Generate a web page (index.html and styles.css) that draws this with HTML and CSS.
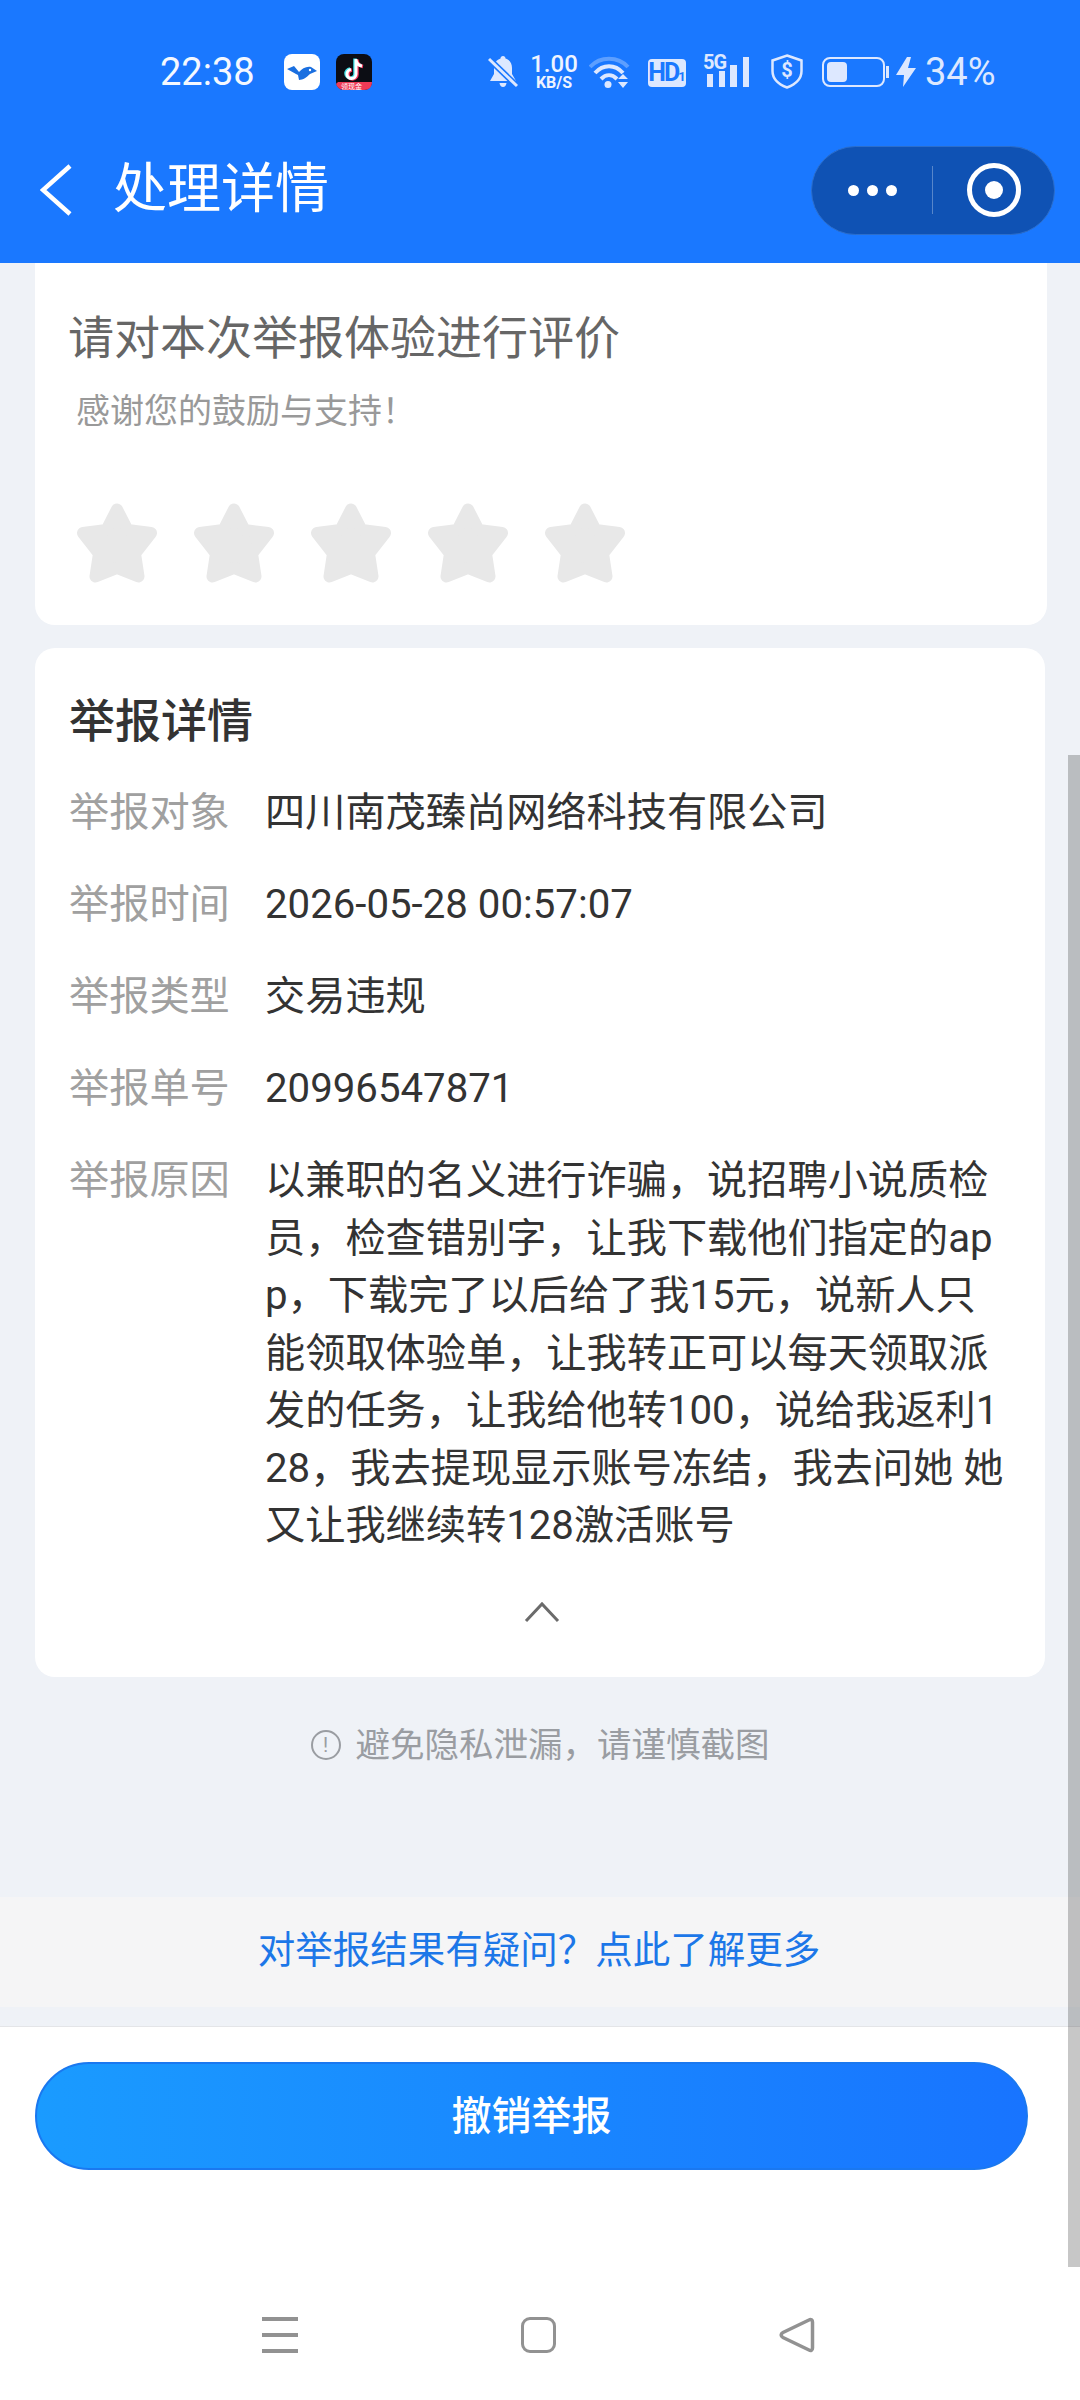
FILE: index.html
```html
<!DOCTYPE html>
<html lang="zh-CN">
<head>
	<meta charset="utf-8">
	<title>处理详情</title>
	<link rel="stylesheet" href="styles.css">
</head>
<body>
<div class="screen">
	<div class="topBar">
		<div class="statusBar">
			<span class="clock">22:38</span>
			<svg class="appIcon birdIcon" width="36" height="36" viewBox="0 0 36 36">
				<rect width="36" height="36" rx="8" fill="#fff"/>
				<path d="M3 15L10 12L15 18C18 15 22 12 27 13L33 17L26 20C23 23 19 26 15 26L14 21L12 20Z" fill="#1a6fe0"/>
				<circle cx="26" cy="16" r="1.200" fill="#fff"/>
			</svg>
			<svg class="appIcon tiktokIcon" width="36" height="36" viewBox="0 0 36 36">
				<rect width="36" height="36" rx="8" fill="#0c0d14"/>
				<path d="M20 5V20A4.500 4.500 0 1 1 15 15.500M20 6C20.500 9.500 23 11.500 26 12" fill="none" stroke="#3fe0e6" stroke-width="3.500" transform="translate(-1 -.5)"/>
				<path d="M20 5V20A4.500 4.500 0 1 1 15 15.500M20 6C20.500 9.500 23 11.500 26 12" fill="none" stroke="#f5365c" stroke-width="3.500" transform="translate(1 .5)"/>
				<path d="M20 5V20A4.500 4.500 0 1 1 15 15.500M20 6C20.500 9.500 23 11.500 26 12" fill="none" stroke="#fff" stroke-width="3"/>
				<path d="M2 28H36V28C36 33 33 36 28 36H8C4 36 1 33 0 30Z" fill="#ef3a56"/>
				<text x="5" y="34.500" font-size="7" fill="#fff" font-family="Noto Sans CJK SC">领现金</text>
			</svg>

			<svg class="bellIcon" width="30" height="34" viewBox="0 0 30 34">
				<path d="M15 1C16.500 1 17.500 2 17.500 3.500C22 5 24 8.500 24 13V19L28 26H2L6 19V13C6 8.500 8 5 12.500 3.500C12.500 2 13.500 1 15 1Z" fill="#dde8ff"/>
				<path d="M11.500 28H18.500C18 30.500 17 32 15 32C13 32 12 30.500 11.500 28Z" fill="#dde8ff"/>
				<path d="M1 4L29 31" stroke="#1a78ff" stroke-width="6"/>
				<path d="M1 4L29 31" stroke="#dde8ff" stroke-width="3"/>
			</svg>
			<div class="netSpeed">1.00<small>KB/S</small></div>
			<svg class="wifiIcon" width="44" height="34" viewBox="0 0 44 34">
				<path d="M1 12C11 1 29 1 39 12" fill="none" stroke="#dde8ff" stroke-opacity=".35" stroke-width="4"/>
				<path d="M6 18C14 9 26 9 34 18" fill="none" stroke="#dde8ff" stroke-width="4"/>
				<path d="M12 24C17 19 23 19 28 24" fill="none" stroke="#dde8ff" stroke-width="4"/>
				<circle cx="19" cy="29.500" r="3.500" fill="#dde8ff"/>
				<path d="M29 24L34 19L39 24ZM29 27L34 33L39 27Z" fill="#dde8ff"/>
			</svg>
			<span class="hdBadge">HD<small>1</small></span>
			<div class="signal">
				<span class="signalLabel">5G</span>
				<svg width="46" height="30" viewBox="0 0 46 30">
					<path d="M4 17H10V30H4ZM16 14H22V30H16ZM27 8H34V30H27ZM40 0H46V30H40Z" fill="#dde8ff"/>
				</svg>
			</div>
			<div class="shield">
				<svg width="32" height="35" viewBox="0 0 32 35">
					<path d="M16 1.500L30.500 6.500V17C30.500 25 24 30.500 16 33.500C8 30.500 1.500 25 1.500 17V6.500Z" fill="none" stroke="#dde8ff" stroke-width="2.500"/>
				</svg>
				<span class="shieldMark">$</span>
			</div>
			<div class="battery"><div class="batteryFill"></div></div>
			<div class="batteryNub"></div>
			<svg class="boltIcon" width="20" height="30" viewBox="0 0 20 30">
				<path d="M11 0L0 18H8L7 30L20 11H12L15 0Z" fill="#dde8ff"/>
			</svg>
			<span class="batteryText">34%</span>
		</div>

		<div class="navBar">
			<svg class="backIcon" width="32" height="52" viewBox="0 0 32 52">
				<path d="M30 2L3 26L30 50" fill="none" stroke="#fff" stroke-width="4.500"/>
			</svg>
			<h1 class="navTitle">处理详情</h1>
			<div class="capsule">
				<div class="capsuleDots"><i></i><i></i><i></i></div>
				<div class="capsuleLine"></div>
				<div class="capsuleTarget"><i></i></div>
			</div>
		</div>
	</div>

	<div class="content">
		<div class="rateCard">
			<div class="rateTitle">请对本次举报体验进行评价</div>
			<div class="rateSub">感谢您的鼓励与支持！</div>
			<div class="stars">
				<svg width="80" height="80" viewBox="0 0 80 80"><use href="#star"/></svg>
				<svg width="80" height="80" viewBox="0 0 80 80"><use href="#star"/></svg>
				<svg width="80" height="80" viewBox="0 0 80 80"><use href="#star"/></svg>
				<svg width="80" height="80" viewBox="0 0 80 80"><use href="#star"/></svg>
				<svg width="80" height="80" viewBox="0 0 80 80"><use href="#star"/></svg>
			</div>
		</div>

		<div class="detailCard">
			<div class="detailTitle">举报详情</div>
			<div class="detailRow"><span class="rowLabel">举报对象</span><span class="rowValue">四川南茂臻尚网络科技有限公司</span></div>
			<div class="detailRow"><span class="rowLabel">举报时间</span><span class="rowValue">2026-05-28 00:57:07</span></div>
			<div class="detailRow"><span class="rowLabel">举报类型</span><span class="rowValue">交易违规</span></div>
			<div class="detailRow"><span class="rowLabel">举报单号</span><span class="rowValue">20996547871</span></div>
			<div class="detailRow"><span class="rowLabel">举报原因</span><span class="rowValue">以兼职的名义进行诈骗，说招聘小说质检员，检查错别字，让我下载他们指定的app，下载完了以后给了我15元，说新人只能领取体验单，让我转正可以每天领取派发的任务，让我给他转100，说给我返利128，我去提现显示账号冻结，我去问她 她又让我继续转128激活账号</span></div>
			<div class="collapse">
				<svg width="36" height="22" viewBox="0 0 36 22">
					<path d="M2 20L18 3L34 20" fill="none" stroke="#6b6b6b" stroke-width="3"/>
				</svg>
			</div>
		</div>

		<div class="tip">
			<span class="tipIcon">!</span>
			<span>避免隐私泄漏，请谨慎截图</span>
		</div>

		<div class="moreBand">对举报结果有疑问？点此了解更多</div>
	</div>

	<div class="footer">
		<div class="cancelBtn">撤销举报</div>
		<div class="sysNav">
			<div class="menuKey"><i></i><i></i><i></i></div>
			<div class="homeKey"></div>
			<svg width="36" height="36" viewBox="0 0 36 36">
				<path d="M30 3C32 2 33.500 3 33.500 5V31C33.500 33 32 34 30 33L4 20.500C1.500 19 1.500 17 4 15.500Z" fill="none" stroke="#929292" stroke-width="3.500"/>
			</svg>
		</div>
	</div>

	<div class="scrollThumb"></div>
</div>

<svg class="defs" width="0" height="0">
	<symbol id="star" viewBox="0 0 80 80">
		<polygon points="40,6.500 50.500,27 74,30 58,50.500 61.500,73.500 40,65 18.500,73.500 22,50.500 6,30 29.500,27" fill="#e8e8e8" stroke="#e8e8e8" stroke-width="12" stroke-linejoin="round"/>
	</symbol>
</svg>
</body>
</html>
```

FILE: styles.css
```css
* {
	box-sizing: border-box;
}

body {
	margin: 0;
	font-family: Roboto, "Noto Sans CJK SC", sans-serif;
	background-color: #eff2f7;
}

.screen {
	position: relative;
	width: 1080px;
	height: 2400px;
	overflow: hidden;
	display: flex;
	flex-direction: column;
}

.defs {
	position: absolute;
}

/* top blue part */
.topBar {
	height: 263px;
	background-color: #1a78ff;
	color: #fff;
}

.statusBar {
	height: 108px;
	padding: 54px 0 0 160px;
	display: flex;
	align-items: flex-start;
}

.clock {
	font-size: 38px;
	line-height: 36px;
	width: 94px;
	color: #f4f8ff;
}

.birdIcon {
	margin-left: 30px;
}

.tiktokIcon {
	margin-left: 16px;
}

.bellIcon {
	margin: 1px 0 0 116px;
}

.netSpeed {
	width: 48px;
	margin-left: 12px;
	text-align: center;
	color: #eef4ff;
	font-size: 24px;
	line-height: 20px;
	font-weight: 500;
}

.netSpeed small {
	display: block;
	margin-top: 2px;
	font-size: 16px;
	line-height: 14px;
	font-weight: 700;
}

.wifiIcon {
	margin: 1px 0 0 11px;
}

.hdBadge {
	margin: 5px 0 0 15px;
	width: 38px;
	height: 28px;
	border-radius: 4px;
	background-color: #dde8ff;
	color: #1a78ff;
	font-size: 25px;
	line-height: 28px;
	font-weight: 700;
	letter-spacing: -2px;
	text-align: center;
}

.hdBadge small {
	font-size: 13px;
	letter-spacing: 0;
}

.signal {
	position: relative;
	width: 49px;
	height: 34px;
	margin-left: 17px;
	padding-top: 3px;
}

.signal svg {
	display: block;
}

.signalLabel {
	position: absolute;
	left: 0;
	top: 0;
	font-size: 20px;
	line-height: 17px;
	font-weight: 700;
	letter-spacing: -1px;
	color: #dde8ff;
}

.shield {
	position: relative;
	width: 32px;
	height: 35px;
	margin-left: 19px;
}

.shieldMark {
	position: absolute;
	left: 0;
	right: 0;
	top: 5px;
	text-align: center;
	font-size: 20px;
	line-height: 23px;
	font-weight: 700;
	color: #dde8ff;
}

.battery {
	width: 63px;
	height: 30px;
	margin: 3px 0 0 19px;
	padding: 3px;
	border: 2.500px solid #dde8ff;
	border-radius: 8px;
}

.batteryFill {
	width: 20px;
	height: 100%;
	border-radius: 4px;
	background-color: #dde8ff;
}

.batteryNub {
	width: 3px;
	height: 12px;
	margin: 12px 0 0 1px;
	background-color: #dde8ff;
}

.boltIcon {
	margin: 3px 0 0 7px;
}

.batteryText {
	margin-left: 9px;
	font-size: 38px;
	line-height: 36px;
	color: #dde8ff;
}

.navBar {
	height: 155px;
	padding: 9px 25px 0 40px;
	display: flex;
	align-items: center;
}

.navTitle {
	margin: 0 0 0 41px;
	font-size: 54px;
	line-height: 60px;
	font-weight: 400;
	flex: 1;
}

.capsule {
	width: 244px;
	height: 89px;
	border-radius: 45px;
	background-color: #0f52b4;
	border: 1px solid #2c6ecb;
	display: flex;
	align-items: center;
}

.capsuleDots {
	width: 120px;
	display: flex;
	justify-content: center;
	gap: 8px;
}

.capsuleDots i {
	width: 11px;
	height: 11px;
	border-radius: 50%;
	background-color: #fff;
}

.capsuleLine {
	width: 1px;
	height: 48px;
	background-color: rgba(255, 255, 255, 0.3);
}

.capsuleTarget {
	width: 54px;
	height: 54px;
	margin-left: 34px;
	border: 5px solid #fff;
	border-radius: 50%;
	display: flex;
	align-items: center;
	justify-content: center;
}

.capsuleTarget i {
	width: 18px;
	height: 18px;
	border-radius: 50%;
	background-color: #fff;
}

/* scrolled content */
.content {
	height: 1763px;
	padding-left: 35px;
}

.rateCard {
	width: 1012px;
	height: 362px;
	padding: 46px 0 0 33px;
	background-color: #fff;
	border-radius: 0 0 20px 20px;
}

.rateTitle {
	font-size: 46px;
	line-height: 58px;
	color: #666;
}

.rateSub {
	margin: 24px 0 0 8px;
	font-size: 34px;
	line-height: 40px;
	color: #999;
}

.stars {
	display: flex;
	gap: 37px;
	margin: 72px 0 0 9px;
}

.stars svg {
	display: block;
}

.detailCard {
	width: 1010px;
	height: 1029px;
	margin-top: 23px;
	padding: 43px 0 0 34px;
	background-color: #fff;
	border-radius: 20px;
}

.detailTitle {
	font-size: 46px;
	line-height: 60px;
	font-weight: 500;
	color: #333;
	margin-bottom: 33px;
}

.detailRow {
	display: flex;
	margin-bottom: 34.500px;
	font-size: 40.200px;
	line-height: 57.500px;
}

.rowLabel {
	width: 196px;
	flex-shrink: 0;
	color: #a0a0a0;
}

.rowValue {
	width: 745px;
	color: #333;
	word-break: break-all;
}

.collapse {
	margin-top: 46px;
	padding-left: 455px;
}

.collapse svg {
	display: block;
}

.tip {
	width: 1010px;
	margin-top: 48px;
	display: flex;
	align-items: center;
	justify-content: center;
	gap: 15px;
	font-size: 34.500px;
	line-height: 40px;
	color: #9a9da2;
}

.tipIcon {
	width: 30px;
	height: 30px;
	border: 2px solid #9a9da2;
	border-radius: 50%;
	font-size: 20px;
	line-height: 26px;
	text-align: center;
}

.moreBand {
	width: 1080px;
	height: 110px;
	margin: 132px 0 0 -35px;
	padding-right: 2px;
	background-color: #f5f5f6;
	color: #1c77e8;
	font-size: 37.500px;
	line-height: 106px;
	text-align: center;
}

/* bottom part */
.footer {
	flex: 1;
	padding: 35px 0 0 35px;
	background-color: #fff;
	border-top: 1px solid #e4e5e8;
}

.cancelBtn {
	width: 993px;
	height: 108px;
	border-radius: 54px;
	border: 2px solid #1a78f0;
	background: linear-gradient(90deg, #1a9bff, #1874ff);
	color: #fff;
	font-size: 40px;
	font-weight: 500;
	line-height: 106px;
	text-align: center;
}

.sysNav {
	margin: 147px 0 0 227px;
	display: flex;
	align-items: center;
}

.menuKey {
	width: 36px;
	height: 36px;
	display: flex;
	flex-direction: column;
	justify-content: space-between;
}

.menuKey i {
	height: 4px;
	background-color: #929292;
}

.homeKey {
	width: 35px;
	height: 36px;
	margin: 0 223px;
	border: 3.500px solid #929292;
	border-radius: 9px;
}

.scrollThumb {
	position: absolute;
	left: 1068px;
	top: 755px;
	width: 12px;
	height: 1512px;
	background-color: rgba(0, 0, 0, 0.22);
}
```
